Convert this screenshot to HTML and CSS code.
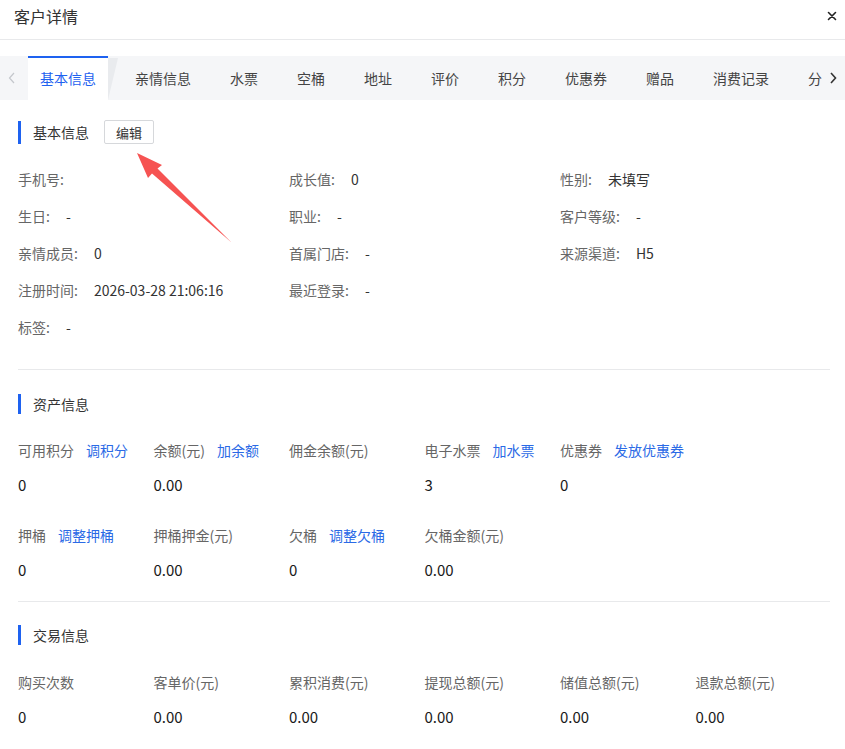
FILE: index.html
```html
<!doctype html>
<html lang="zh-CN">
<head>
<meta charset="utf-8">
<title>客户详情</title>
<link rel="stylesheet" href="styles.css">
</head>
<body>
<div class="dialog">
  <header class="dialog-head">
    <h2>客户详情</h2>
    <span class="close">
      <svg width="10" height="10" viewBox="0 0 10 10"><path d="M1.5 1.5 8.5 8.5M8.5 1.5 1.5 8.5" stroke="#222" stroke-width="1.6" stroke-linecap="round"/></svg>
    </span>
  </header>

  <nav class="tabs">
    <span class="tab-arrow left">
      <svg width="8" height="12" viewBox="0 0 8 12"><path d="M6 1 1.5 6 6 11" fill="none" stroke="#c4c7cc" stroke-width="1.2"/></svg>
    </span>
    <div class="tab-list">
      <span class="tab active">基本信息</span>
      <span class="tab">亲情信息</span>
      <span class="tab">水票</span>
      <span class="tab">空桶</span>
      <span class="tab">地址</span>
      <span class="tab">评价</span>
      <span class="tab">积分</span>
      <span class="tab">优惠券</span>
      <span class="tab">赠品</span>
      <span class="tab">消费记录</span>
      <span class="tab">分</span>
    </div>
    <span class="tab-arrow right">
      <svg width="8" height="12" viewBox="0 0 8 12"><path d="M2 1 6.5 6 2 11" fill="none" stroke="#333" stroke-width="1.6"/></svg>
    </span>
  </nav>

  <section class="block basic">
    <div class="block-title">
      <span class="bar">基本信息</span>
      <button class="btn">编辑</button>
    </div>
    <div class="info-grid">
      <div class="info"><span class="lbl">手机号:</span></div>
      <div class="info"><span class="lbl">成长值:</span><span class="val">0</span></div>
      <div class="info"><span class="lbl">性别:</span><span class="val">未填写</span></div>

      <div class="info"><span class="lbl">生日:</span><span class="val">-</span></div>
      <div class="info"><span class="lbl">职业:</span><span class="val">-</span></div>
      <div class="info"><span class="lbl">客户等级:</span><span class="val">-</span></div>

      <div class="info"><span class="lbl">亲情成员:</span><span class="val">0</span></div>
      <div class="info"><span class="lbl">首属门店:</span><span class="val">-</span></div>
      <div class="info"><span class="lbl">来源渠道:</span><span class="val">H5</span></div>

      <div class="info"><span class="lbl">注册时间:</span><span class="val">2026-03-28 21:06:16</span></div>
      <div class="info"><span class="lbl">最近登录:</span><span class="val">-</span></div>
      <div class="info"></div>

      <div class="info"><span class="lbl">标签:</span><span class="val">-</span></div>
    </div>
  </section>

  <section class="block">
    <div class="block-title"><span class="bar">资产信息</span></div>
    <div class="stat-grid">
      <div class="stat"><div class="lbl">可用积分<a class="link">调积分</a></div><div class="num">0</div></div>
      <div class="stat"><div class="lbl">余额(元)<a class="link">加余额</a></div><div class="num">0.00</div></div>
      <div class="stat"><div class="lbl">佣金余额(元)</div><div class="num"></div></div>
      <div class="stat"><div class="lbl">电子水票<a class="link">加水票</a></div><div class="num">3</div></div>
      <div class="stat"><div class="lbl">优惠券<a class="link">发放优惠券</a></div><div class="num">0</div></div>
      <div class="stat"></div>

      <div class="stat"><div class="lbl">押桶<a class="link">调整押桶</a></div><div class="num">0</div></div>
      <div class="stat"><div class="lbl">押桶押金(元)</div><div class="num">0.00</div></div>
      <div class="stat"><div class="lbl">欠桶<a class="link">调整欠桶</a></div><div class="num">0</div></div>
      <div class="stat"><div class="lbl">欠桶金额(元)</div><div class="num">0.00</div></div>
    </div>
  </section>

  <section class="block last">
    <div class="block-title"><span class="bar">交易信息</span></div>
    <div class="stat-grid">
      <div class="stat"><div class="lbl">购买次数</div><div class="num">0</div></div>
      <div class="stat"><div class="lbl">客单价(元)</div><div class="num">0.00</div></div>
      <div class="stat"><div class="lbl">累积消费(元)</div><div class="num">0.00</div></div>
      <div class="stat"><div class="lbl">提现总额(元)</div><div class="num">0.00</div></div>
      <div class="stat"><div class="lbl">储值总额(元)</div><div class="num">0.00</div></div>
      <div class="stat"><div class="lbl">退款总额(元)</div><div class="num">0.00</div></div>
    </div>
  </section>

  <!-- annotation arrow pointing at the edit button -->
  <svg class="pointer" width="110" height="110" viewBox="130 145 110 110">
    <path d="M137 153 L162 165 L157.5 168.5 L231.5 242.5 L152 173.5 L148 178 Z" fill="#f65352"/>
  </svg>
</div>
</body>
</html>
```

FILE: styles.css
```css
:root{--blue:#1e62f0;--link:#2b6ae6;--line:#e8e9eb;}
html,body{margin:0;padding:0;background:#fff;}
body{font-family:"Noto Sans CJK SC","Noto Sans",sans-serif;color:#333;font-size:14px;}

.dialog{position:relative;width:845px;min-height:749px;}

/* header */
.dialog-head{
  height:39px;
  box-sizing:border-box;
  display:flex;
  align-items:flex-start;
  justify-content:space-between;
  padding:6px 6px 0 14px;
  border-bottom:1px solid var(--line);
}
.dialog-head h2{margin:0;font-size:16px;font-weight:400;color:#333;line-height:20px;}
.close{display:flex;width:10px;height:10px;margin:5px 2px 0 0;}
.dialog-head{height:40px;}

/* tabs */
.tabs{
  margin-top:16px;
  height:44px;
  display:flex;
  background:#f5f6f8;
}
.tab-arrow{display:flex;align-items:center;justify-content:center;flex:none;}
.tab-arrow.left{width:28px;justify-content:flex-start;padding-left:8px;box-sizing:border-box;}
.tab-arrow.right{width:22px;justify-content:flex-start;padding-left:6px;box-sizing:border-box;}
.tab-list{flex:1;display:flex;gap:15px;overflow:hidden;}
.tab{
  flex:none;
  position:relative;
  padding:0 12px;
  line-height:44px;
  color:#444;
  white-space:nowrap;
}
.tab.active{
  background:#fff;
  color:var(--blue);
  box-shadow:inset 0 2px 0 var(--blue);
}
.tab.active::after{
  content:"";
  position:absolute;
  left:100%;
  top:2px;
  width:10px;
  bottom:0;
  background:#e9ebee;
  clip-path:polygon(0 0,100% 0,0 100%);
}

/* sections */
.block{margin:0 15px 0 18px;border-bottom:1px solid var(--line);}
.block.last{border-bottom:none;}
.block-title{display:flex;align-items:center;}
.bar{
  border-left:3px solid var(--blue);
  padding-left:12px;
  line-height:20px;
  color:#333;
}
.basic .block-title{margin-top:20px;}
.basic .bar{line-height:23px;}
.btn{
  margin-left:15px;
  width:50px;
  height:24px;
  padding:0;
  border:1px solid #d6d8db;
  border-radius:2px;
  background:#fff;
  font:13px "Noto Sans CJK SC",sans-serif;
  color:#333;
}

.info-grid{
  display:grid;
  grid-template-columns:271px 271px 1fr;
  padding:16px 0 24px;
}
.info{height:37px;display:flex;align-items:center;}
.info .lbl{color:#666;}
.info .val{margin-left:16px;color:#333;}

.block + .block .block-title{margin-top:24px;}
.block.last .block-title{margin-top:23px;}
.stat-grid{
  display:grid;
  grid-template-columns:repeat(6,135.5px);
  row-gap:30px;
  padding:26px 0 21px;
}
.block.last .stat-grid{padding-top:27px;}
.stat .lbl{line-height:20px;color:#666;white-space:nowrap;}
.stat .num{margin-top:15px;height:20px;line-height:20px;font-size:15px;color:#1a1a1a;}
.link{margin-left:12px;color:var(--link);cursor:pointer;}

.pointer{position:absolute;left:130px;top:145px;pointer-events:none;}
```
